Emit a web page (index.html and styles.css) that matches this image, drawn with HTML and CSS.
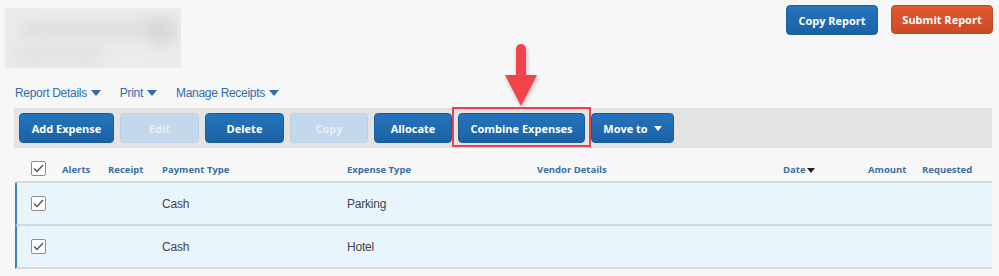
FILE: index.html
```html
<!DOCTYPE html>
<html>
<head>
<meta charset="utf-8">
<link rel="stylesheet" href="styles.css">
</head>
<body>
<header class="top">
  <div class="blur-box">
    <div class="blob b1"></div>
    <div class="blob b2"></div>
    <div class="blob b3"></div>
  </div>
  <div class="top-actions">
    <button class="btn btn-blue btn-copy-report">Copy Report</button>
    <button class="btn btn-orange btn-submit">Submit Report</button>
  </div>
</header>

<nav class="subnav">
  <a class="navlink">Report Details <span class="caret"></span></a>
  <a class="navlink">Print <span class="caret"></span></a>
  <a class="navlink">Manage Receipts <span class="caret"></span></a>
</nav>

<div class="toolbar">
  <button class="btn btn-blue w95">Add Expense</button>
  <button class="btn btn-disabled w79">Edit</button>
  <button class="btn btn-blue w79">Delete</button>
  <button class="btn btn-disabled w78">Copy</button>
  <button class="btn btn-blue w78">Allocate</button>
  <div class="highlight-wrap">
    <svg class="arrow" width="34" height="64" viewBox="0 0 34 64">
      <line x1="17" y1="6" x2="17" y2="36" stroke="#f0434a" stroke-width="10" stroke-linecap="round"/>
      <polygon points="1,32 33,32 17,63" fill="#f0434a"/>
    </svg>
    <button class="btn btn-blue w127">Combine Expenses</button>
    <span class="red-box"></span>
  </div>
  <button class="btn btn-blue w83">Move to <span class="caret caret-white"></span></button>
</div>

<div class="grid-head">
  <span class="cb"><svg width="11" height="9" viewBox="0 0 11 9"><polyline points="1,4.5 4,7.5 10,1" fill="none" stroke="#555" stroke-width="1.4"/></svg></span>
  <span class="th">Alerts</span>
  <span class="th">Receipt</span>
  <span class="th">Payment Type</span>
  <span class="th">Expense Type</span>
  <span class="th">Vendor Details</span>
  <span class="th">Date <span class="caret caret-dark"></span></span>
  <span class="th">Amount</span>
  <span class="th">Requested</span>
</div>

<div class="grid-body">
  <div class="row">
    <span class="cb"><svg width="11" height="9" viewBox="0 0 11 9"><polyline points="1,4.5 4,7.5 10,1" fill="none" stroke="#555" stroke-width="1.4"/></svg></span>
    <span></span>
    <span></span>
    <span class="td">Cash</span>
    <span class="td">Parking</span>
    <span></span><span></span><span></span><span></span>
  </div>
  <div class="row">
    <span class="cb"><svg width="11" height="9" viewBox="0 0 11 9"><polyline points="1,4.5 4,7.5 10,1" fill="none" stroke="#555" stroke-width="1.4"/></svg></span>
    <span></span>
    <span></span>
    <span class="td">Cash</span>
    <span class="td">Hotel</span>
    <span></span><span></span><span></span><span></span>
  </div>
</div>
</body>
</html>
```

FILE: styles.css
```css
* { box-sizing: border-box; }

body {
  margin: 0;
  background: #f7f7f7;
  font-family: "Liberation Sans", Arial, sans-serif;
  width: 999px;
  height: 276px;
  overflow: hidden;
}

.top {
  display: flex;
  justify-content: space-between;
  align-items: flex-start;
  padding: 5px 6px 0 5px;
}

.blur-box {
  position: relative;
  width: 176px;
  height: 60px;
  margin-top: 3px;
  background: #ececec;
  overflow: hidden;
}

.blob {
  position: absolute;
  background: #dadada;
  filter: blur(8px);
  border-radius: 10px;
}
.b1 { left: 14px; top: 14px; width: 150px; height: 14px; }
.b2 { left: 8px; top: 40px; width: 90px; height: 14px; background: #dedede; }
.b3 { left: 145px; top: 12px; width: 24px; height: 24px; background: #d4d4d4; }

.top-actions {
  display: flex;
  gap: 13px;
}

.btn {
  font-family: "Open Sans", "Liberation Sans", sans-serif;
  font-weight: 700;
  font-size: 11px;
  color: #fff;
  border: 1px solid transparent;
  border-radius: 4px;
  height: 30px;
  padding: 0;
  display: inline-flex;
  align-items: center;
  justify-content: center;
  gap: 6px;
  cursor: default;
}

.btn-blue {
  background: linear-gradient(#2474bd, #1b62a5);
  border-color: #1a5d9c;
}
.btn-orange {
  background: linear-gradient(#e2592f, #cb4a25);
  border-color: #c04624;
}
.btn-disabled {
  background: #c3d8ea;
  border-color: #bad0e4;
  color: #e6eff7;
}

.btn-copy-report { width: 92px; }
.btn-submit { width: 102px; height: 29px; }

.subnav {
  display: flex;
  gap: 19px;
  margin-top: 18px;
  padding-left: 15px;
  line-height: 14px;
}

.navlink {
  color: #2e6db0;
  font-size: 12px;
  letter-spacing: -0.3px;
  display: inline-flex;
  align-items: center;
  gap: 4px;
}

.caret {
  display: inline-block;
  width: 0;
  height: 0;
  border-left: 5px solid transparent;
  border-right: 5px solid transparent;
  border-top: 6px solid #2e6db0;
}
.caret-white { border-top-color: #fff; border-left-width: 4.5px; border-right-width: 4.5px; border-top-width: 5px; }
.caret-dark { border-top-color: #222; border-left-width: 4px; border-right-width: 4px; border-top-width: 5px; margin-left: 1px; }

.toolbar {
  display: flex;
  gap: 6px;
  align-items: center;
  margin: 8px 7px 0 14px;
  height: 40px;
  padding: 0 5px;
  background: #e3e3e3;
}

.w95 { width: 95px; }
.w79 { width: 79px; }
.w78 { width: 78px; }
.w127 { width: 127px; }
.w83 { width: 83px; }

.highlight-wrap {
  position: relative;
  display: flex;
}

.red-box {
  position: absolute;
  left: -6px;
  right: -6px;
  top: -6px;
  bottom: -4px;
  border: 2px solid #e8434b;
  pointer-events: none;
}

.arrow {
  position: absolute;
  left: 46px;
  bottom: 36px;
  filter: drop-shadow(1px 2px 2px rgba(0,0,0,0.25));
}

.grid-head,
.row {
  display: grid;
  grid-template-columns: 31px 46px 54px 185px 190px 246px 85px 54px 1fr;
  padding-left: 16px;
}

.grid-head {
  margin: 0 7px 0 15px;
  height: 33px;
  padding-top: 13px;
  align-items: start;
}

.th {
  font-family: "Open Sans", "Liberation Sans", sans-serif;
  font-weight: 700;
  font-size: 9.5px;
  color: #3b6ea6;
  line-height: 18px;
  display: inline-flex;
  align-items: center;
}

.cb {
  width: 15px;
  height: 15px;
  border: 1px solid #8c8c8c;
  border-radius: 2px;
  background: #fff;
  display: inline-flex;
  align-items: center;
  justify-content: center;
}

.grid-body {
  margin: 0 7px 0 15px;
  border-top: 2px solid #d5dae0;
}

.row {
  height: 43px;
  align-items: center;
  background: #e9f5fd;
  border-bottom: 2px solid #d5dae0;
  border-left: 2px solid #3d80c4;
  padding-left: 14px;
}

.td {
  font-size: 12px;
  color: #444;
  letter-spacing: -0.2px;
}
```
